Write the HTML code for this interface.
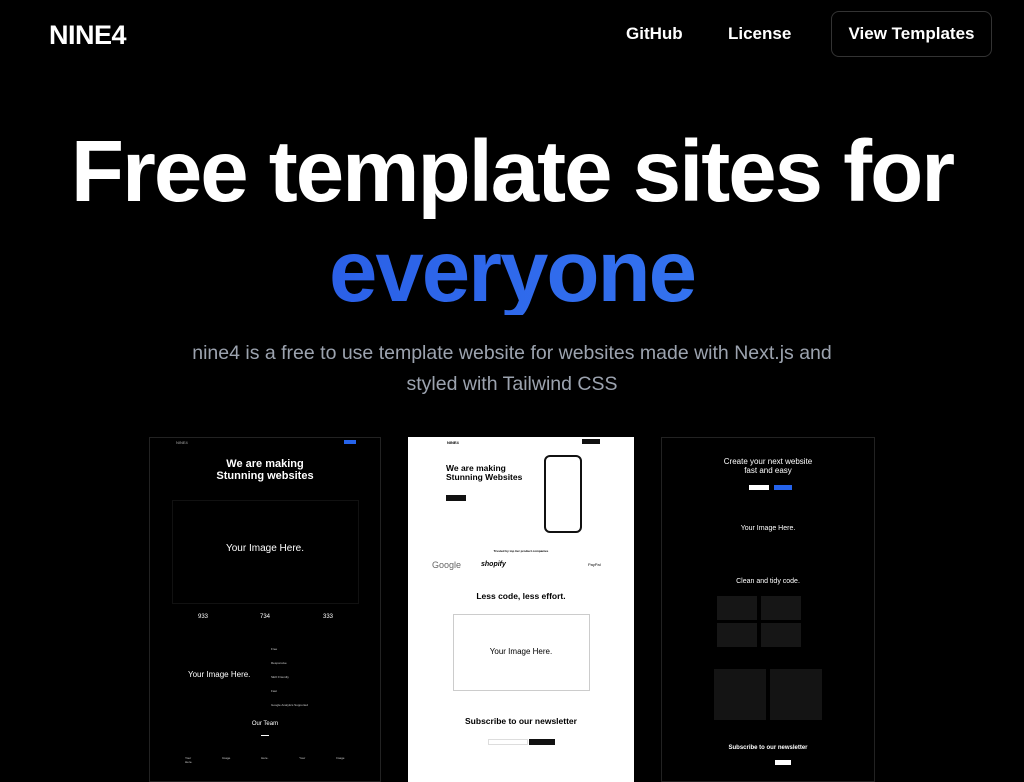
<!DOCTYPE html>
<html><head><meta charset="utf-8"><style>
*{margin:0;padding:0;box-sizing:border-box}
body{width:1024px;height:768px;overflow:hidden;background:#000;color:#fff;font-family:"Liberation Sans",sans-serif;position:relative}
.abs{position:absolute}
.logo{left:49px;top:20px;font-size:27px;font-weight:700;letter-spacing:-0.5px}
.nav{top:24px;font-size:17px;font-weight:700}
.btn{left:831px;top:11px;width:161px;height:46px;border:1px solid #333;border-radius:8px;font-size:17px;font-weight:700;display:flex;align-items:center;justify-content:center}
h1{position:absolute;left:0;width:1024px;text-align:center;font-size:87px;font-weight:700;letter-spacing:-2px;line-height:1}
.sub{left:0;width:1024px;top:338px;text-align:center;color:#9ca3af;font-size:19.5px;line-height:31px}
.card{position:absolute;top:437px;height:345px;overflow:hidden}
.c{text-align:center;position:absolute;left:0;width:100%}
</style></head><body>
<div class="abs logo">NINE4</div>
<div class="abs nav" style="left:626px">GitHub</div>
<div class="abs nav" style="left:728px">License</div>
<div class="abs btn">View Templates</div>
<h1 style="top:128px">Free template sites for</h1>
<h1 style="top:228px;background:linear-gradient(90deg,#2350e0,#3b82f6);-webkit-background-clip:text;background-clip:text;color:transparent">everyone</h1>
<div class="abs sub">nine4 is a free to use template website for websites made with Next.js and<br>styled with Tailwind CSS</div>

<div class="card" style="left:149px;width:232px;border:1px solid #222;background:#000">
 <div class="abs" style="left:26px;top:2px;font-size:4px;color:#aaa">NINE4</div>
 <div class="abs" style="left:194px;top:2px;width:12px;height:4px;background:#2563eb"></div>
 <div class="c" style="top:20px;font-size:11px;line-height:12px;font-weight:700">We are making<br>Stunning websites</div>
 <div class="abs" style="left:22px;top:62px;width:187px;height:104px;border:1px solid #111"></div>
 <div class="c" style="top:105px;font-size:10px">Your Image Here.</div>
 <div class="abs" style="left:48px;top:176px;font-size:6px">933</div>
 <div class="abs" style="left:110px;top:176px;font-size:6px">734</div>
 <div class="abs" style="left:173px;top:176px;font-size:6px">333</div>
 <div class="abs" style="left:38px;top:232px;font-size:8px">Your Image Here.</div>
 <div class="abs" style="left:121px;top:204px;font-size:3px;line-height:14px;color:#ccc">Free<br>Responsive<br>SEO Friendly<br>Fast<br>Google Analytics Supported</div>
 <div class="c" style="top:283px;font-size:6px">Our Team</div>
 <div class="abs" style="left:111px;top:297px;width:8px;height:1px;background:#fff"></div>
 <div class="abs" style="left:35px;top:318px;font-size:3px;word-spacing:30px;color:#ccc">Your Image Here. Your Image Here.</div>
</div>

<div class="card" style="left:408px;width:226px;background:#fff;color:#000">
 <div class="abs" style="left:39px;top:3px;font-size:4px;font-weight:700">NINE4</div>
 <div class="abs" style="left:174px;top:2px;width:18px;height:5px;background:#111"></div>
 <div class="abs" style="left:38px;top:27px;font-size:8.5px;line-height:9px;font-weight:700">We are making<br>Stunning Websites</div>
 <div class="abs" style="left:38px;top:58px;width:20px;height:6px;background:#111"></div>
 <div class="abs" style="left:136px;top:18px;width:38px;height:78px;border:2px solid #111;border-radius:6px"></div>
 <div class="c" style="top:112px;font-size:3px;font-weight:700">Trusted by top tier product companies</div>
 <div class="abs" style="left:24px;top:123px;font-size:9px;color:#666">Google</div>
 <div class="abs" style="left:73px;top:124px;font-size:7px;font-weight:700;font-style:italic">shopify</div>
 <div class="abs" style="left:180px;top:125px;font-size:4px">PayPal</div>
 <div class="c" style="top:154px;font-size:8.5px;font-weight:700">Less code, less effort.</div>
 <div class="abs" style="left:45px;top:177px;width:137px;height:77px;border:1px solid #ccc"></div>
 <div class="c" style="top:210px;font-size:8px">Your Image Here.</div>
 <div class="c" style="top:279px;font-size:8.5px;font-weight:700">Subscribe to our newsletter</div>
 <div class="abs" style="left:80px;top:302px;width:40px;height:6px;border:1px solid #ddd"></div>
 <div class="abs" style="left:121px;top:302px;width:26px;height:6px;background:#111"></div>
</div>

<div class="card" style="left:661px;width:214px;border:1px solid #222;background:#000">
 <div class="c" style="top:19px;font-size:8px;line-height:9px">Create your next website<br>fast and easy</div>
 <div class="abs" style="left:87px;top:47px;width:20px;height:5px;background:#fff"></div>
 <div class="abs" style="left:112px;top:47px;width:18px;height:5px;background:#2563eb"></div>
 <div class="c" style="top:87px;font-size:7px">Your Image Here.</div>
 <div class="c" style="top:140px;font-size:7px">Clean and tidy code.</div>
 <div class="abs" style="left:55px;top:158px;width:40px;height:24px;background:#161616"></div>
 <div class="abs" style="left:99px;top:158px;width:40px;height:24px;background:#161616"></div>
 <div class="abs" style="left:55px;top:185px;width:40px;height:24px;background:#161616"></div>
 <div class="abs" style="left:99px;top:185px;width:40px;height:24px;background:#161616"></div>
 <div class="abs" style="left:52px;top:231px;width:52px;height:51px;background:#141414"></div>
 <div class="abs" style="left:108px;top:231px;width:52px;height:51px;background:#141414"></div>
 <div class="c" style="top:307px;font-size:6px;font-weight:700">Subscribe to our newsletter</div>
 <div class="abs" style="left:113px;top:322px;width:16px;height:5px;background:#fff"></div>
</div>
</body></html>
